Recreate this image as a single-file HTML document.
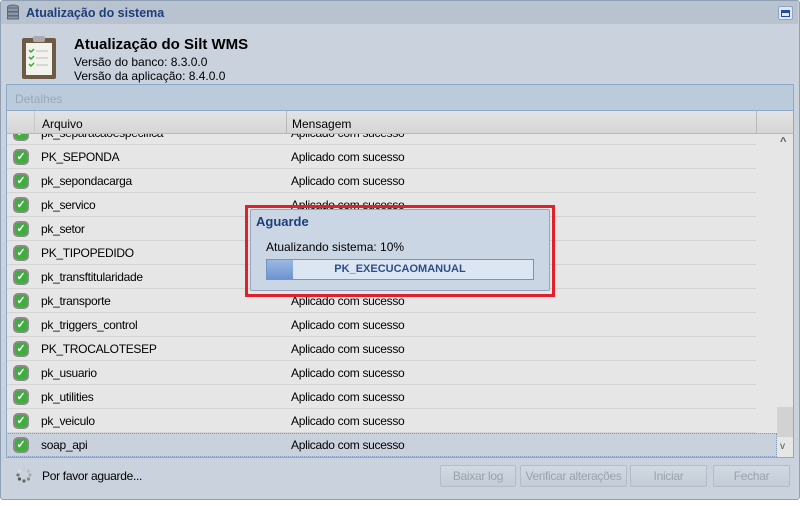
<!DOCTYPE html>
<html><head><style>
*{margin:0;padding:0;box-sizing:border-box}
body{width:806px;height:506px;background:#fff;font-family:"Liberation Sans",sans-serif;font-size:12px;color:#000;position:relative;overflow:hidden}
.a{position:absolute}
.win{left:0;top:0;width:800px;height:500px;background:#c9d2dd;border:1px solid #8fa0b5;border-radius:3px}
.title{left:1px;top:1px;width:797px;height:23px;background:#b9c3d0}
.grid{left:6px;top:134px;width:771px;height:323px;overflow:hidden;background:#e6e6e6;letter-spacing:-0.3px}
.row{position:absolute;left:0;width:750px;height:24px;border-bottom:1px solid #d3d3d3}
.row span{position:absolute;top:5px}
.ic{position:absolute;left:7px;top:4px;width:16px;height:16px;border-radius:5px;background:#3fae3f;border:2px solid #8a8a8a;color:#fff;font-size:11px;line-height:12px;text-align:center;font-weight:bold}
.btn{top:465px;height:22px;border:1px solid #b3bcc8;border-radius:2px;background:linear-gradient(#d2d9e2,#c3ccd8);color:#9aa3ae;text-align:center;line-height:20px;letter-spacing:-0.3px}
</style></head><body>
<div class="a win"></div>
<div class="a title"></div>
<svg class="a" style="left:6px;top:4px" width="14" height="16"><g fill="#8a96a6" stroke="#5c6878"><ellipse cx="7" cy="3" rx="5.5" ry="2"/><rect x="1.5" y="4" width="11" height="3.5"/><rect x="1.5" y="8" width="11" height="3.5"/><rect x="1.5" y="12" width="11" height="3"/></g></svg>
<div class="a" style="left:26px;top:6px;color:#1d3f7a;font-weight:bold;font-size:12.5px">Atualização do sistema</div>
<div class="a" style="left:778px;top:6px;width:15px;height:14px;border:1px solid #8ea3c6;border-radius:2px;background:#dfe6f0"><div style="margin:3px 2px;height:7px;border:1px solid #1f4aa0;border-top-width:3px"></div></div>
<svg class="a" style="left:20px;top:33px" width="38" height="48"><rect x="2" y="5" width="34" height="41" rx="2" fill="#6e5a45"/><rect x="6" y="10" width="26" height="32" fill="#f3f3ee"/><rect x="13" y="3" width="12" height="6" rx="2" fill="#aaa"/><g stroke="#3a3" stroke-width="1.5" fill="none"><path d="M9 17l2 2 3-3M9 24l2 2 3-3M9 31l2 2 3-3"/></g><g stroke="#bbb"><path d="M16 18h12M16 25h12M16 32h12"/></g></svg>
<div class="a" style="left:74px;top:36px;font-weight:bold;font-size:15px">Atualização do Silt WMS</div>
<div class="a" style="left:74px;top:55px">Versão do banco: 8.3.0.0</div>
<div class="a" style="left:74px;top:69px">Versão da aplicação: 8.4.0.0</div>
<div class="a" style="left:6px;top:84px;width:788px;height:27px;background:#bccbdb;border:1px solid #8eaacb"></div>
<div class="a" style="left:15px;top:92px;color:#9aa8b8">Detalhes</div>
<div class="a" style="left:6px;top:111px;width:788px;height:23px;background:linear-gradient(#e3e3e3,#d6d6d6);border-bottom:1px solid #b8b8b8;border-left:1px solid #8eaacb;border-right:1px solid #8eaacb"></div>
<div class="a" style="left:34px;top:111px;width:1px;height:23px;background:#c8c8c8"></div>
<div class="a" style="left:286px;top:111px;width:1px;height:23px;background:#b8b8b8"></div>
<div class="a" style="left:756px;top:111px;width:1px;height:23px;background:#b8b8b8"></div>
<div class="a" style="left:42px;top:117px">Arquivo</div>
<div class="a" style="left:292px;top:117px">Mensagem</div>
<div class="a grid">
<div class="row" style="top:-13px"><div class="ic">✓</div><span style="left:35px">pk_separacaoespecifica</span><span style="left:285px">Aplicado com sucesso</span></div>
<div class="row" style="top:11px"><div class="ic">✓</div><span style="left:35px">PK_SEPONDA</span><span style="left:285px">Aplicado com sucesso</span></div>
<div class="row" style="top:35px"><div class="ic">✓</div><span style="left:35px">pk_sepondacarga</span><span style="left:285px">Aplicado com sucesso</span></div>
<div class="row" style="top:59px"><div class="ic">✓</div><span style="left:35px">pk_servico</span><span style="left:285px">Aplicado com sucesso</span></div>
<div class="row" style="top:83px"><div class="ic">✓</div><span style="left:35px">pk_setor</span><span style="left:285px">Aplicado com sucesso</span></div>
<div class="row" style="top:107px"><div class="ic">✓</div><span style="left:35px">PK_TIPOPEDIDO</span><span style="left:285px">Aplicado com sucesso</span></div>
<div class="row" style="top:131px"><div class="ic">✓</div><span style="left:35px">pk_transftitularidade</span><span style="left:285px">Aplicado com sucesso</span></div>
<div class="row" style="top:155px"><div class="ic">✓</div><span style="left:35px">pk_transporte</span><span style="left:285px">Aplicado com sucesso</span></div>
<div class="row" style="top:179px"><div class="ic">✓</div><span style="left:35px">pk_triggers_control</span><span style="left:285px">Aplicado com sucesso</span></div>
<div class="row" style="top:203px"><div class="ic">✓</div><span style="left:35px">PK_TROCALOTESEP</span><span style="left:285px">Aplicado com sucesso</span></div>
<div class="row" style="top:227px"><div class="ic">✓</div><span style="left:35px">pk_usuario</span><span style="left:285px">Aplicado com sucesso</span></div>
<div class="row" style="top:251px"><div class="ic">✓</div><span style="left:35px">pk_utilities</span><span style="left:285px">Aplicado com sucesso</span></div>
<div class="row" style="top:275px"><div class="ic">✓</div><span style="left:35px">pk_veiculo</span><span style="left:285px">Aplicado com sucesso</span></div>
<div class="row" style="top:299px;width:771px;background:#c9d1dd;border:1px dotted #7f97b8"><div class="ic" style="left:6px;top:3px">✓</div><span style="left:34px;top:4px">soap_api</span><span style="left:284px;top:4px">Aplicado com sucesso</span></div>
</div>
<div class="a" style="left:6px;top:134px;width:1px;height:323px;background:#8eaacb"></div>
<div class="a" style="left:777px;top:134px;width:17px;height:323px;background:#e6e6e6;border-right:1px solid #8eaacb"></div>
<div class="a" style="left:777px;top:407px;width:16px;height:30px;background:#d2d2d2"></div>
<div class="a" style="left:780px;top:136px;font-size:11px;color:#555;font-weight:bold">^</div>
<div class="a" style="left:780px;top:441px;font-size:10px;color:#555">v</div>
<div class="a" style="left:6px;top:457px;width:788px;height:1px;background:#8eaacb"></div>
<div class="a" style="left:245px;top:205px;width:310px;height:92px;border:3px solid #e0202a"></div>
<div class="a" style="left:250px;top:209px;width:300px;height:82px;background:#cbd6e4;border:1px solid #95a6bd;border-radius:2px"></div>
<div class="a" style="left:256px;top:214px;color:#1d3f7a;font-weight:bold;font-size:13px">Aguarde</div>
<div class="a" style="left:266px;top:240px">Atualizando sistema: 10%</div>
<div class="a" style="left:266px;top:259px;width:268px;height:21px;background:#dce6f2;border:1px solid #6f96c8"></div>
<div class="a" style="left:267px;top:260px;width:26px;height:19px;background:linear-gradient(#9cb8e0,#6d93cf)"></div>
<div class="a" style="left:266px;top:263px;width:268px;text-align:center;font-weight:bold;color:#2c4f8a;font-size:11px">PK_EXECUCAOMANUAL</div>
<svg class="a" style="left:16px;top:467px" width="16" height="16"><g fill="#888"><circle cx="8" cy="2" r="1.6" fill="#ccc"/><circle cx="12.5" cy="4" r="1.6" fill="#bbb"/><circle cx="14" cy="8" r="1.6" fill="#aaa"/><circle cx="12.5" cy="12" r="1.6"/><circle cx="8" cy="14" r="1.6" fill="#666"/><circle cx="3.5" cy="12" r="1.6" fill="#555"/><circle cx="2" cy="8" r="1.6" fill="#777"/><circle cx="3.5" cy="4" r="1.6" fill="#ddd"/></g></svg>
<div class="a" style="left:42px;top:469px;letter-spacing:-0.3px">Por favor aguarde...</div>
<div class="a btn" style="left:440px;width:76px">Baixar log</div>
<div class="a btn" style="left:520px;width:107px">Verificar alterações</div>
<div class="a btn" style="left:630px;width:77px">Iniciar</div>
<div class="a btn" style="left:713px;width:77px">Fechar</div>
</body></html>
